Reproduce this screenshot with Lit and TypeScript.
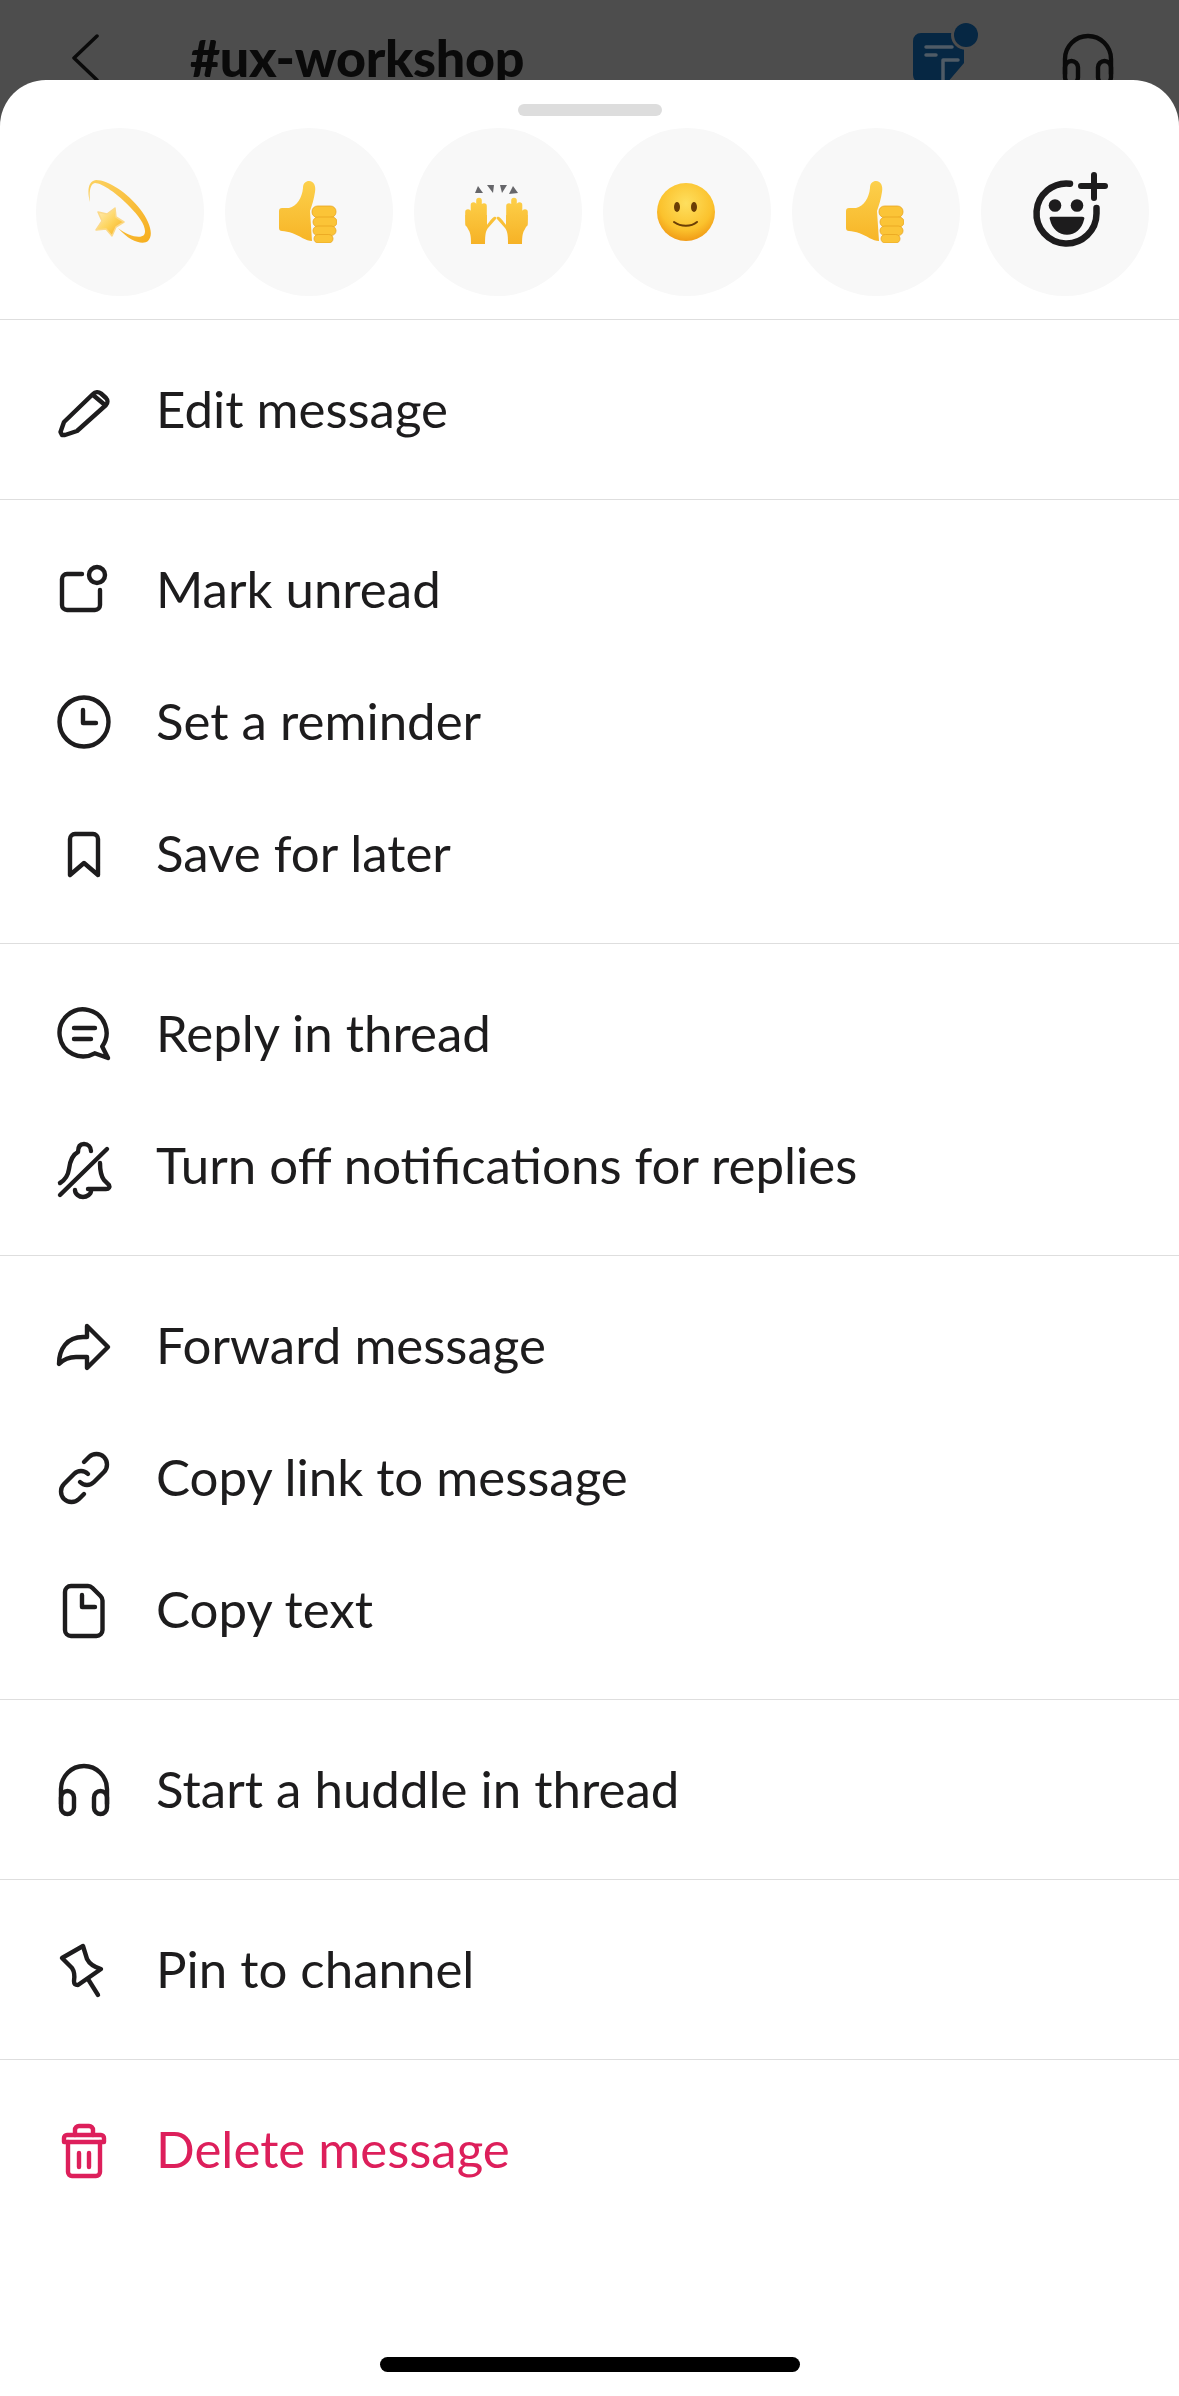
import { LitElement, html, css, svg } from 'lit';
import { customElement } from 'lit/decorators.js';

const stroke = (body: unknown) => html`<svg class="icon" viewBox="0 0 60 60" fill="none" stroke="currentColor" stroke-width="4.4" stroke-linecap="round" stroke-linejoin="round">${body}</svg>`;

const icons: Record<string, unknown> = {
  pencil: svg`<path d="M8 55l-1.500-3L10 42 39 14a6 6 0 0 1 8-.5l5 4.500a5 5 0 0 1 0 7L23 51l-12 4z"/><path d="M39 15l12 10"/>`,
  unread: svg`<path d="M28 14H13a5 5 0 0 0-5 5v26a5 5 0 0 0 5 5h28a5 5 0 0 0 5-5V30"/><circle cx="43" cy="15" r="8"/>`,
  clock: svg`<circle cx="30" cy="30" r="24.500"/><path d="M29 18v13h13"/>`,
  bookmark: svg`<path d="M16 51V15a5 5 0 0 1 5-5h18a5 5 0 0 1 5 5v36L30 39z"/>`,
  reply: svg`<path d="M48.200 42.500a23.500 23.500 0 1 0-7.500 6.800L54 54z"/><path d="M20 24h21M20 35h17"/>`,
  belloff: svg`<path d="M6 47c5-3 8-7 9-14 1-8 3-14 9-17 0-5 2-8 6-8s7 3 7 7"/><path d="M46 27c0 7 1 13 4 17l5 5c1 2 0 4-3 4H34"/><path d="M21 54c0 4 4 7 8 7s8-3 8-6"/><path d="M6 59L53 13"/>`,
  forward: svg`<path d="M33 10L54 31 33 52V41H22c-7 0-12 2-17 7 0-15 8-27 24-27h4z"/>`,
  link: svg`<path d="M26 34c4 4 10 4 14 0l10-10c4-4 4-11 0-15s-11-4-15 0l-5 5"/><path d="M34 26c-4-4-10-4-14 0L10 36c-4 4-4 11 0 15s11 4 15 0l5-5"/>`,
  file: svg`<path d="M17 6h17c2 0 3 .5 4.500 2l8 8c1.500 1.500 2 2.500 2 4.500V50a6 6 0 0 1-6 6H17a6 6 0 0 1-6-6V12a6 6 0 0 1 6-6z"/><path d="M28 15v12h13"/>`,
  headphones: svg`<path d="M7 44V29a23 23 0 0 1 46 0v15"/><rect x="7" y="31" width="13" height="23" rx="6.500"/><rect x="40" y="31" width="13" height="23" rx="6.500"/>`,
  pin: svg`<path d="M8 18L29 6l4 13c2 4 7 8 14 10L24 45c-3 0-4-1-4-4 1-6 0-10-2-13z"/><path d="M34 39l10 16"/>`,
  trash: svg`<path d="M21 15V10a4 4 0 0 1 4-4h10a4 4 0 0 1 4 4v5"/><path d="M13 15h34a3 3 0 0 1 3 3v4H10v-4a3 3 0 0 1 3-3z"/><path d="M14 22v30a4 4 0 0 0 4 4h24a4 4 0 0 0 4-4V22"/><path d="M25 33v14M35 33v14"/>`,
};

const thumb = svg`<svg viewBox="0 0 58 62" class="emoji thumb">
  <defs><linearGradient id="th" x1="0" y1="0" x2="0" y2="1"><stop offset="0" stop-color="#fcd04c"/><stop offset="1" stop-color="#f7b527"/></linearGradient></defs>
  <path d="M3 27h7c8-2 13-10 14-20 0-5 3-7 6-7 5 0 7 5 6 11-1 7-3 13-5 19l2 30c-6 0-12-5-20-8-3-1-7-2-10-2-2 0-3-1-3-3V30c0-2 1-3 3-3z" fill="url(#th)"/>
  <g fill="#fbc437" stroke="#e9a51f" stroke-width=".8"><rect x="33" y="25" width="24" height="11.500" rx="5.500"/><rect x="34" y="36" width="24" height="10" rx="5"/><rect x="34" y="45" width="23" height="9.500" rx="4.700"/><rect x="35" y="53.500" width="19" height="8.500" rx="4.200"/></g>
</svg>`;

const star = svg`<svg viewBox="0 0 66 66" class="emoji star">
  <defs>
    <linearGradient id="st" x1="0" y1="0" x2="1" y2="1"><stop offset="0" stop-color="#fff0c0"/><stop offset=".55" stop-color="#fdd257"/><stop offset="1" stop-color="#f5a81c"/></linearGradient>
    <linearGradient id="ri" x1="0" y1="0" x2="1" y2="1"><stop offset="0" stop-color="#fcd261"/><stop offset="1" stop-color="#f6ae1e"/></linearGradient>
  </defs>
  <path d="M4 23C1 12 2 2 10 1 22 1 42 14 54 30c10 13 14 26 8 32-5 4-18 1-30-13 10 8 22 11 26 7 4-6-4-18-14-28C32 15 16 4 9 4 4 5 3 13 4 23z" fill="url(#ri)"/>
  <path d="M29 29l1 9 8 5-8 5-4 9-6-7-10 1 6-9-4-9 9 2z" fill="url(#st)" stroke="#fbd989" stroke-width="1.500" stroke-linejoin="round"/>
</svg>`;

const hand = svg`
  <g fill="none" stroke="url(#ha)" stroke-width="5.600" stroke-linecap="round"><path d="M3 27v12M8.500 20v18M14 15.500v20M19 21v16"/></g>
  <path d="M.3 30L22 30V40c2-3 5-7 7-8s3 1 2 2l-8 9c-2 3-3 5-3 16H6c0-9-1-12-3-15C1 41 .3 36 .3 30z" fill="url(#ha)"/>`;

const hands = svg`<svg viewBox="0 0 63 59" class="emoji hands">
  <defs><linearGradient id="ha" gradientUnits="userSpaceOnUse" x1="0" y1="12" x2="0" y2="59"><stop offset="0" stop-color="#fdd04a"/><stop offset="1" stop-color="#f6b226"/></linearGradient></defs>
  <g fill="#66666a"><path d="M13 1l-3 7h8z"/><path d="M22 0l7 0-1 8z"/><path d="M35 0l7 0-5 8z"/><path d="M48 1l-4 8 9-1z"/></g>
  ${hand}
  <g transform="translate(63 0) scale(-1 1)">${hand}</g>
</svg>`;

const smile = svg`<svg viewBox="0 0 58 58" class="emoji smile">
  <defs><radialGradient id="sm" cx=".5" cy=".35" r=".7"><stop offset="0" stop-color="#fedf5e"/><stop offset=".65" stop-color="#fbc22d"/><stop offset="1" stop-color="#ee9110"/></radialGradient></defs>
  <circle cx="29" cy="29" r="29" fill="url(#sm)"/>
  <ellipse cx="20" cy="24" rx="3" ry="5" fill="#6b3e05"/><ellipse cx="37" cy="24" rx="3" ry="5" fill="#6b3e05"/>
  <path d="M17 39c7 5 17 5 23 0" fill="none" stroke="#6b3e05" stroke-width="2" stroke-linecap="round"/>
</svg>`;

const addReaction = svg`<svg viewBox="0 0 75 75" class="add" fill="none" stroke="#1d1c1d" stroke-linecap="round">
  <path d="M37 11.700A30 30 0 1 0 63.500 41.500V36" stroke-width="6.500"/>
  <path d="M61 3v23M48 14h24" stroke-width="6"/>
  <circle cx="22" cy="33.500" r="6.300" fill="#1d1c1d" stroke="none"/><circle cx="44" cy="33.500" r="6.300" fill="#1d1c1d" stroke="none"/>
  <path d="M18 44.700h31c2 0 3 1 2 3-2 9-9 15-17 15s-15-6-17-15c-1-2 0-3 1-3z" fill="#1d1c1d" stroke="none"/>
</svg>`;

const groups: { icon: string; label: string; danger?: boolean }[][] = [
  [{ icon: 'pencil', label: 'Edit message' }],
  [
    { icon: 'unread', label: 'Mark unread' },
    { icon: 'clock', label: 'Set a reminder' },
    { icon: 'bookmark', label: 'Save for later' },
  ],
  [
    { icon: 'reply', label: 'Reply in thread' },
    { icon: 'belloff', label: 'Turn off notifications for replies' },
  ],
  [
    { icon: 'forward', label: 'Forward message' },
    { icon: 'link', label: 'Copy link to message' },
    { icon: 'file', label: 'Copy text' },
  ],
  [{ icon: 'headphones', label: 'Start a huddle in thread' }],
  [{ icon: 'pin', label: 'Pin to channel' }],
  [{ icon: 'trash', label: 'Delete message', danger: true }],
];

@customElement('app-root')
export class AppRoot extends LitElement {
  static styles = css`
    :host {
      display: block;
      height: 2396px;
      background: #4d4d4d;
      font-family: 'Lato', 'Liberation Sans', sans-serif;
      color: #1d1c1d;
      overflow: hidden;
    }

    .topbar {
      height: 80px;
      display: flex;
      align-items: flex-start;
      padding: 33px 61px 0 71px;
      box-sizing: border-box;
      color: #0a0a0a;
    }

    .back { width: 28px; height: 50px; flex: none; }

    .title {
      margin: -2px 0 0 91px;
      font-size: 52px;
      font-weight: 900;
      line-height: 52px;
      letter-spacing: -0.3px;
    }

    .canvas { margin: -10px 0 0 auto; width: 66px; height: 60px; flex: none; }
    .phones { width: 60px; height: 60px; flex: none; margin: -3px 0 0 79px; }

    .sheet {
      position: relative;
      height: 2316px;
      background: #fff;
      border-radius: 46px 46px 0 0;
      display: flex;
      flex-direction: column;
    }

    .handle {
      width: 144px;
      height: 12px;
      border-radius: 6px;
      background: #dddddd;
      margin: 24px auto 12px;
    }

    .reactions {
      display: flex;
      gap: 21px;
      padding: 0 31px 23px 36px;
      border-bottom: 1px solid #dedede;
    }

    .reaction {
      width: 168px;
      height: 168px;
      flex: none;
      border-radius: 50%;
      background: #f8f8f8;
      display: flex;
      align-items: center;
      justify-content: center;
    }

    .emoji { display: block; margin-right: 2px; }
    .thumb { width: 58px; height: 62px; }
    .star { width: 66px; height: 66px; margin-right: 3px; }
    .hands { width: 63px; height: 59px; margin: 4px 4px 0 0; }
    .smile { width: 58px; height: 58px; }
    .add { width: 75px; height: 75px; display: block; margin: -5px 0 0 11px; overflow: visible; }

    .group { padding: 24px 0 23px; border-bottom: 1px solid #dedede; }
    .group:last-child { border-bottom: none; }

    .row {
      height: 132px;
      display: flex;
      align-items: center;
      gap: 42px;
      padding-left: 54px;
      font-size: 51px;
    }

    .row span { margin-bottom: 3px; }
    .row.danger { color: #dd1f5b; }

    .icon { width: 60px; height: 60px; flex: none; display: block; overflow: visible; }

    .home {
      flex: none;
      width: 420px;
      height: 15px;
      border-radius: 8px;
      background: #000;
      margin: auto auto 24px;
    }
  `;

  render() {
    return html`
      <div class="topbar">
        <svg class="back" viewBox="0 0 28 50" fill="none" stroke="currentColor" stroke-width="3.500" stroke-linecap="round" stroke-linejoin="round"><path d="M26 3L3 25l23 22"/></svg>
        <div class="title">#ux-workshop</div>
        <svg class="canvas" viewBox="0 0 66 60">
          <path d="M8 10h34v5h9v25L34 60H8a8 8 0 0 1-8-8V18a8 8 0 0 1 8-8z" fill="#062743"/>
          <circle cx="53" cy="12" r="15" fill="#4d4d4d"/>
          <path d="M13 24h26M13 32h10M30 58V37h15" fill="none" stroke="#4f5b66" stroke-width="3.500" stroke-linecap="round" stroke-linejoin="round"/>
          <circle cx="53" cy="12" r="12" fill="#062743"/>
        </svg>
        <svg class="phones" viewBox="0 0 60 60" fill="none" stroke="currentColor" stroke-width="4.400" stroke-linecap="round" stroke-linejoin="round">${icons.headphones}</svg>
      </div>
      <div class="sheet">
        <div class="handle"></div>
        <div class="reactions">
          <div class="reaction">${star}</div>
          <div class="reaction">${thumb}</div>
          <div class="reaction">${hands}</div>
          <div class="reaction">${smile}</div>
          <div class="reaction">${thumb}</div>
          <div class="reaction">${addReaction}</div>
        </div>
        <div class="menu">
          ${groups.map(
            (g) => html`<div class="group">
              ${g.map(
                (item) => html`<div class="row ${item.danger ? 'danger' : ''}">
                  ${stroke(icons[item.icon])}<span>${item.label}</span>
                </div>`,
              )}
            </div>`,
          )}
        </div>
        <div class="home"></div>
      </div>
    `;
  }
}
